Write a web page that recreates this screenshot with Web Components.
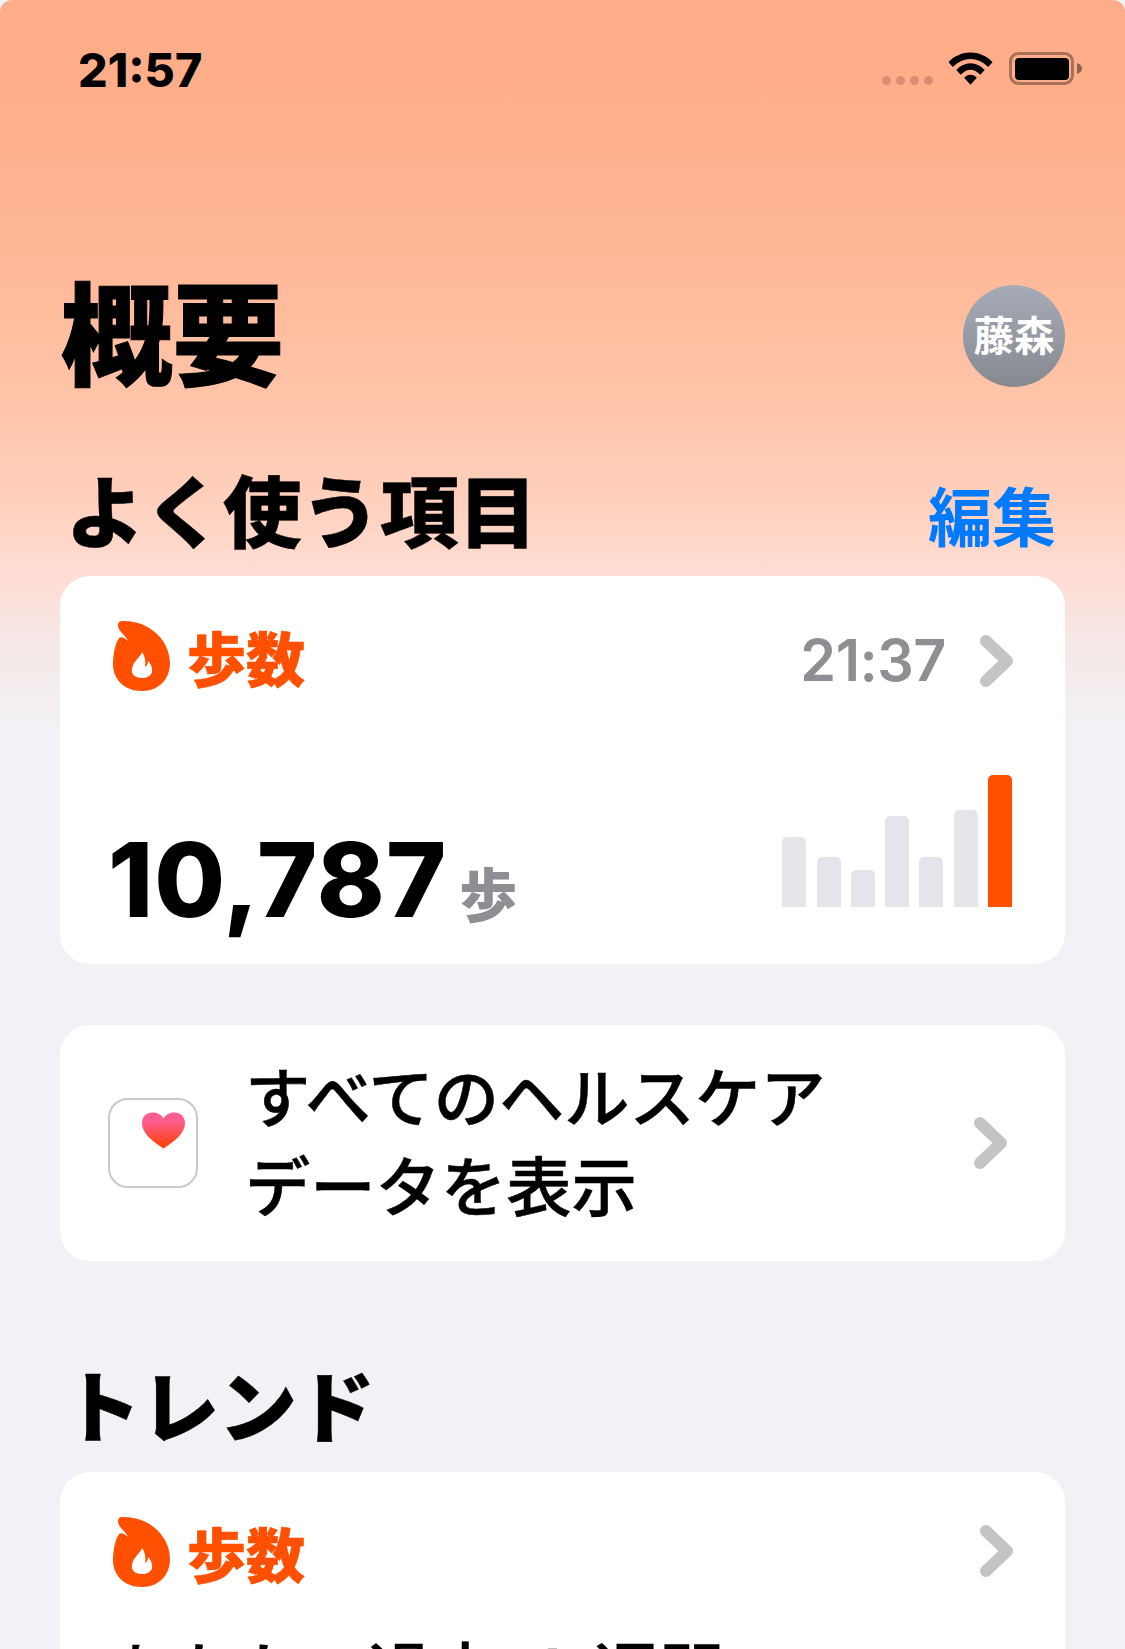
<!DOCTYPE html>
<html lang="ja">
<head>
<meta charset="utf-8">
<title>概要</title>
<style>
  html, body { margin: 0; padding: 0; }
  body {
    width: 1125px; height: 1649px; overflow: hidden;
    font-family: "Noto Sans CJK JP", "Noto Sans", sans-serif;
    background: #f2f1f5;
  }
</style>
</head>
<body>
<health-page>
  <status-bar slot="status"></status-bar>
  <summary-header slot="header" title="概要" initials="藤森"></summary-header>
  <section-title title="よく使う項目" action="編集"></section-title>
  <steps-card time="21:37" value="10,787"></steps-card>
  <all-data-row></all-data-row>
  <section-title class="trend" title="トレンド"></section-title>
  <trend-card></trend-card>
</health-page>

<script>
const FLAME = `<svg viewBox="0 0 58 72" width="58" height="72">
  <path fill="#ff4f00" fill-rule="evenodd" d="M9 1 C5 1 4 5 6 9 C8 13 13 16 15 21 C12 18 8 16 6 18 C2 24 0 35 0 44 C0 60 12 71 29 71 C46 71 57 59 57 43 C57 21 37 0 9 1 Z M29 32 C27 38 20 41 19 49 C18 55 23 58 29 58 C35 58 40 55 39 49 C38.500 45 37 43 35 41 C35 44 34 46 32 47 C33 41 32 36 29 32 Z"/>
</svg>`;
const CHEVRON = `<svg viewBox="0 0 34 52" width="34" height="52">
  <path d="M6 6 L27 26 L6 46" fill="none" stroke="#c4c4c7" stroke-width="12" stroke-linecap="round" stroke-linejoin="round"/>
</svg>`;

class HealthPage extends HTMLElement {
  connectedCallback() {
    this.attachShadow({ mode: 'open' });
    this.shadowRoot.innerHTML = `
      <style>
        :host {
          display: block;
          height: 1649px;
          overflow: hidden;
          border-radius: 12px 12px 0 0;
          background: linear-gradient(#ffad88 0, #ffae8a 100px, #ffb998 270px, #ffc4a9 400px, #ffd0bd 500px, #ffdcd2 570px, #f6e8e6 640px, #f2f1f5 730px);
        }
        .top { display: block; }
        .content { display: block; padding: 0 60px; }
      </style>
      <div class="top"><slot name="status"></slot></div>
      <div class="content">
        <slot name="header"></slot>
        <slot></slot>
      </div>
    `;
  }
}

class StatusBar extends HTMLElement {
  connectedCallback() {
    this.attachShadow({ mode: 'open' });
    this.shadowRoot.innerHTML = `
      <style>
        :host { display: flex; justify-content: space-between; align-items: flex-start; height: 280px; padding: 46px 43px 0 78px; box-sizing: border-box; color: #000; }
        .time { font: 800 46.500px/48px Inter, "Liberation Sans", sans-serif; }
        .icons { display: flex; align-items: flex-end; margin-top: 6px; }
        .dots { display: flex; gap: 5px; margin-right: 15px; }
        .dots i { width: 9px; height: 9px; border-radius: 50%; background: #d98e74; }
        .wifi { margin-right: 16px; }
        svg { display: block; }
      </style>
      <span class="time">21:57</span>
      <div class="icons">
        <div class="dots"><i></i><i></i><i></i><i></i></div>
        <svg class="wifi" viewBox="0 0 46 33" width="45" height="33">
          <path d="M0.500 10 C13 -3 33 -3 45.500 10 L41 15 C30.500 4 15.500 4 5 15 Z"/>
          <path d="M8.500 18 C16.500 9 29.500 9 37.500 18 L33 23 C26.500 16 19.500 16 13 23 Z"/>
          <path d="M16.500 26 C20 22 26 22 29.500 26 L23 33 Z"/>
        </svg>
        <svg viewBox="0 0 73 33" width="73" height="33">
          <rect x="1.500" y="1.500" width="62" height="30" rx="8" fill="none" stroke="#ab705a" stroke-width="3"/>
          <rect x="6" y="6" width="54" height="22" rx="4" fill="#000"/>
          <path d="M68 11 C71 12 73 14 73 16.500 C73 19 71 21 68 22 Z" fill="#8a6250"/>
        </svg>
      </div>
    `;
  }
}

class SummaryHeader extends HTMLElement {
  connectedCallback() {
    const title = this.getAttribute('title');
    const initials = this.getAttribute('initials');
    this.attachShadow({ mode: 'open' });
    this.shadowRoot.innerHTML = `
      <style>
        :host { display: flex; justify-content: space-between; align-items: center; height: 112px; }
        h1 { margin: 0 0 15px 1px; font: 900 111.500px/112px "Noto Sans CJK JP", sans-serif; color: #000; -webkit-text-stroke: 1px #000; }
        .avatar {
          width: 102px; height: 102px; border-radius: 50%;
          background: linear-gradient(#a7abb8, #86898f);
          color: #fff; font: 700 40.500px/98px "Noto Sans CJK JP", sans-serif;
          text-align: center;
        }
      </style>
      <h1>${title}</h1>
      <div class="avatar">${initials}</div>
    `;
  }
}

class SectionTitle extends HTMLElement {
  connectedCallback() {
    const title = this.getAttribute('title');
    const action = this.getAttribute('action');
    this.attachShadow({ mode: 'open' });
    this.shadowRoot.innerHTML = `
      <style>
        :host { display: flex; justify-content: space-between; align-items: flex-end; height: 90px; margin-top: 71px; margin-bottom: 23px; }
        :host(.trend) { margin-top: 97px; margin-bottom: 24px; }
        :host(.trend) h2 { margin-left: 3px; font-size: 78px; }
        h2 { margin: 0 0 0 6px; font: 900 78.500px/90px "Noto Sans CJK JP", sans-serif; color: #000; -webkit-text-stroke: .5px #000; }
        a { font: 700 64px/80px "Noto Sans CJK JP", sans-serif; color: #007aff; margin-right: 9px; }
      </style>
      <h2>${title}</h2>
      ${action ? `<a>${action}</a>` : ''}
    `;
  }
}

class MetricHead extends HTMLElement {
  connectedCallback() {
    const time = this.getAttribute('time');
    this.attachShadow({ mode: 'open' });
    this.shadowRoot.innerHTML = `
      <style>
        :host { display: flex; align-items: center; height: 72px; color: #ff4f00; }
        svg { display: block; }
        .flame { margin: 0 0 8px 5px; }
        .label { font: 900 59px/72px "Noto Sans CJK JP", sans-serif; margin: 0 0 6px 16px; -webkit-text-stroke: .5px #ff4f00; }
        .time { margin-left: auto; font: 600 57.500px/72px Inter, "Liberation Sans", sans-serif; color: #8e8e93; letter-spacing: -.5px; }
        .chev { margin: 2px 0 0 34px; }
        :host([plain]) .chev { margin: 0 0 10px 34px; }
      </style>
      <span class="flame">${FLAME}</span>
      <span class="label">歩数</span>
      <span class="time">${time || ''}</span>
      <span class="chev">${CHEVRON}</span>
    `;
  }
}

class StepsCard extends HTMLElement {
  connectedCallback() {
    const bars = [70, 50, 37, 91, 50, 97, 132];
    this.attachShadow({ mode: 'open' });
    this.shadowRoot.innerHTML = `
      <style>
        :host { display: flex; flex-direction: column; height: 388px; box-sizing: border-box; padding: 48px 51px 28px 48px; background: #fff; border-radius: 30px; }
        .bottom { display: flex; justify-content: space-between; align-items: flex-end; margin-top: auto; }
        .num { font: 800 102.500px/112px Inter, "Liberation Sans", sans-serif; color: #000; letter-spacing: 1px; display: flex; align-items: baseline; }
        .unit { font: 900 58px/54px "Noto Sans CJK JP", sans-serif; color: #8e8e93; margin-left: 12px; }
        .bars { display: flex; align-items: flex-end; gap: 10.300px; height: 132px; margin-bottom: 29px; margin-right: 2px; }
        .bars i { width: 24px; background: #e5e4ea; border-radius: 5px 5px 0 0; }
        .bars i:last-child { background: #ff4f00; }
      </style>
      <metric-head time="${this.getAttribute('time')}"></metric-head>
      <div class="bottom">
        <div class="num">${this.getAttribute('value')}<span class="unit">歩</span></div>
        <div class="bars">${bars.map(h => `<i style="height:${h}px"></i>`).join('')}</div>
      </div>
    `;
  }
}

class AllDataRow extends HTMLElement {
  connectedCallback() {
    this.attachShadow({ mode: 'open' });
    this.shadowRoot.innerHTML = `
      <style>
        :host { display: flex; align-items: center; height: 236px; margin-top: 61px; box-sizing: border-box; padding: 0 57px 0 48px; background: #fff; border-radius: 30px; }
        .tile { position: relative; width: 86px; height: 86px; border: 2px solid #c9c9cb; border-radius: 20px; flex: none; background: #fff; }
        .tile svg { position: absolute; left: 32px; top: 12px; }
        .text { margin: 0 0 10px 47px; font: 500 65.300px/89px "Noto Sans CJK JP", sans-serif; color: #000; flex: 1; -webkit-text-stroke: .5px #000; }
        .chev { display: block; height: 52px; }
      </style>
      <div class="tile">
        <svg viewBox="0 0 44 38" width="43" height="38">
          <defs><linearGradient id="h" x1="0" y1="0" x2="0" y2="1"><stop offset="0.250" stop-color="#ff5c8f"/><stop offset="0.850" stop-color="#ff4418"/></linearGradient></defs>
          <path fill="url(#h)" d="M22 37 C12 30 0 22 0 11 C0 4 5 0 11 0 C16 0 20 2.500 22 6 C24 2.500 28 0 33 0 C39 0 44 4 44 11 C44 22 32 30 22 37 Z"/>
        </svg>
      </div>
      <div class="text">すべてのヘルスケア<br>データを表示</div>
      <span class="chev">${CHEVRON}</span>
    `;
  }
}

class TrendCard extends HTMLElement {
  connectedCallback() {
    this.attachShadow({ mode: 'open' });
    this.shadowRoot.innerHTML = `
      <style>
        :host { display: block; height: 400px; box-sizing: border-box; padding: 48px 51px 0 48px; background: #fff; border-radius: 30px; }
        p { margin: 37px 0 0; font: 500 65px/80px "Noto Sans CJK JP", sans-serif; color: #000; white-space: nowrap; word-spacing: 15px; -webkit-text-stroke: .5px #000; }
      </style>
      <metric-head plain></metric-head>
      <p>あなたの過去 4 週間</p>
    `;
  }
}

customElements.define('health-page', HealthPage);
customElements.define('status-bar', StatusBar);
customElements.define('summary-header', SummaryHeader);
customElements.define('section-title', SectionTitle);
customElements.define('metric-head', MetricHead);
customElements.define('steps-card', StepsCard);
customElements.define('all-data-row', AllDataRow);
customElements.define('trend-card', TrendCard);
</script>
</body>
</html>
